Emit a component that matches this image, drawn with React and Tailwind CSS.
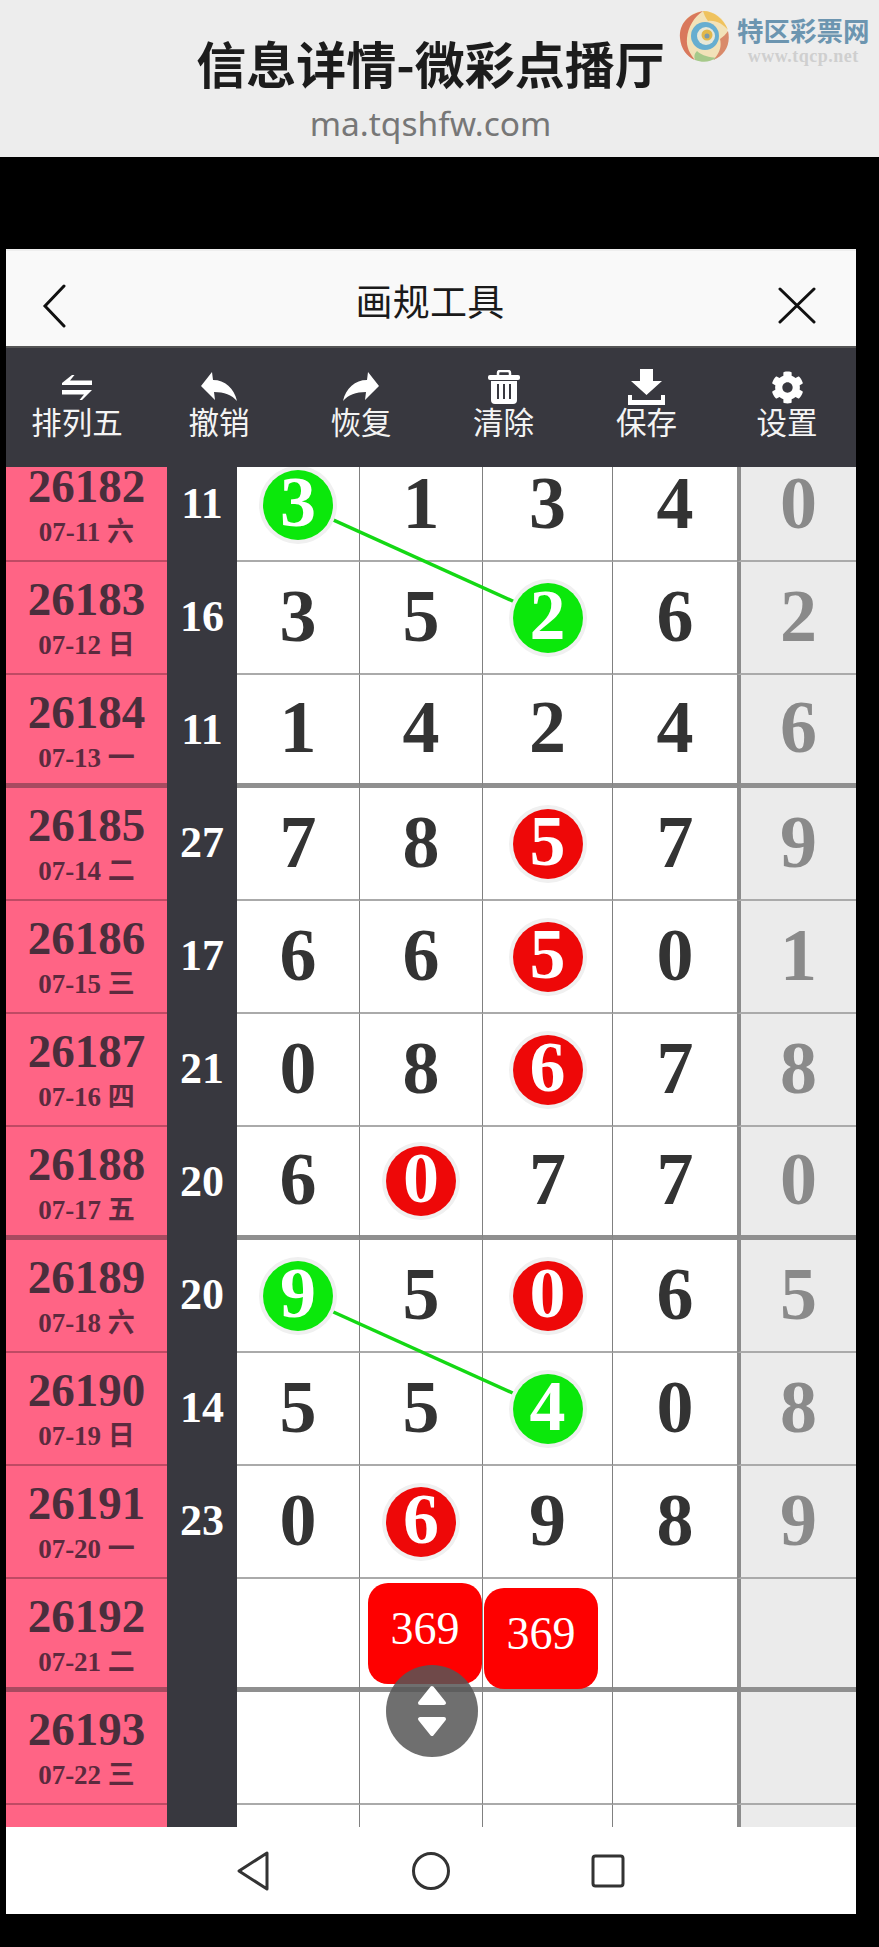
import React from "react";
import { FaCog } from "react-icons/fa";

const rows = [
  { id: "26182", date: "07-11 六", sum: "11", nums: ["3", "1", "3", "4", "0"], hit: { 0: "green" } },
  { id: "26183", date: "07-12 日", sum: "16", nums: ["3", "5", "2", "6", "2"], hit: { 2: "green" } },
  { id: "26184", date: "07-13 一", sum: "11", nums: ["1", "4", "2", "4", "6"], thick: true },
  { id: "26185", date: "07-14 二", sum: "27", nums: ["7", "8", "5", "7", "9"], hit: { 2: "red" } },
  { id: "26186", date: "07-15 三", sum: "17", nums: ["6", "6", "5", "0", "1"], hit: { 2: "red" } },
  { id: "26187", date: "07-16 四", sum: "21", nums: ["0", "8", "6", "7", "8"], hit: { 2: "red" } },
  { id: "26188", date: "07-17 五", sum: "20", nums: ["6", "0", "7", "7", "0"], hit: { 1: "red" }, thick: true },
  { id: "26189", date: "07-18 六", sum: "20", nums: ["9", "5", "0", "6", "5"], hit: { 0: "green", 2: "red" } },
  { id: "26190", date: "07-19 日", sum: "14", nums: ["5", "5", "4", "0", "8"], hit: { 2: "green" } },
  { id: "26191", date: "07-20 一", sum: "23", nums: ["0", "6", "9", "8", "9"], hit: { 1: "red" } },
  { id: "26192", date: "07-21 二", sum: "", nums: ["", "", "", "", ""], thick: true },
  { id: "26193", date: "07-22 三", sum: "", nums: ["", "", "", "", ""] },
  { id: "26194", date: "07-23 四", sum: "", nums: ["", "", "", "", ""] },
];

const tools = [
  { label: "排列五", icon: <SwapIcon /> },
  { label: "撤销", icon: <UndoIcon /> },
  { label: "恢复", icon: <UndoIcon flip /> },
  { label: "清除", icon: <TrashIcon /> },
  { label: "保存", icon: <SaveIcon /> },
  { label: "设置", icon: <FaCog className="w-[33px] h-[33px] text-white" /> },
];

function SwapIcon() {
  return (
    <svg width="30" height="25" viewBox="0 0 30 25" fill="#fff">
      <path d="M0 8 10 0h2.5L8 5.5h22V10H0z" />
      <path d="M0 15h30L20 25h-2.5l4.5-5.5H0z" />
    </svg>
  );
}

function UndoIcon({ flip }) {
  return (
    <svg width="36" height="30" viewBox="0 0 36 30" fill="#fff" className={flip ? "-scale-x-100" : ""}>
      <path d="M0 14 11 0l1 8c12 0 21 8 24 21-5-6-13-9-23-9l1 8z" />
    </svg>
  );
}

function TrashIcon() {
  return (
    <svg width="32" height="34" viewBox="0 0 32 34">
      <path d="M10 5V3q0-2 2-2h8q2 0 2 2v2" fill="none" stroke="#fff" strokeWidth="2.5" />
      <rect x="0" y="5" width="32" height="5" rx="2" fill="#fff" />
      <path d="M3 11h26v19q0 4-4 4H7q-4 0-4-4z" fill="#fff" />
      <path d="M10 14v15M16 14v15M22 14v15" stroke="#38383f" strokeWidth="2" />
    </svg>
  );
}

function SaveIcon() {
  return (
    <svg width="37" height="36" viewBox="0 0 37 36" fill="#fff">
      <path d="M12 0h13v12h9L18.5 26 3 12h9z" />
      <path d="M0 26h4v5h29v-5h4v10H0z" />
    </svg>
  );
}

function Ball({ color, children }) {
  return (
    <div
      className={`relative z-10 flex items-center justify-center mt-[4px] w-[70px] h-[70px] pb-[6px] box-border rounded-full text-white text-[72px] leading-none shadow-[0_0_0_4px_#f0f0f0] ${
        color === "green" ? "bg-[#0be80b]" : "bg-[#ee0808]"
      }`}
    >
      {children}
    </div>
  );
}

function Row({ row }) {
  const line = row.thick ? "border-b-[5px] border-b-[#8f8f8f]" : "border-b-2 border-b-[#aaa]";
  const pinkLine = row.thick ? "border-b-[5px] border-b-[#a84a60]" : "border-b-2 border-b-[#bf4a64]";
  return (
    <div className="grid grid-cols-[161px_70px_123px_123px_130px_124px_119px] h-[113px] font-['Liberation_Serif','Noto_Sans_CJK_SC',serif] font-bold">
      <div className={`box-border flex flex-col items-center pt-[14px] bg-[#ff6485] text-[#4a2e3c] ${pinkLine}`}>
        <div className="text-[47px] leading-[47px]">{row.id}</div>
        <div className="mt-[7px] text-[27px] leading-[30px] text-[#5c2a3e]">{row.date}</div>
      </div>
      <div className="flex items-center justify-center pb-[4px] bg-[#38383f] text-white text-[44px] leading-none">{row.sum}</div>
      {row.nums.map((num, i) => (
        <div
          key={i}
          className={`box-border flex items-center justify-center pb-[4px] text-[74px] leading-none ${line} ${
            i === 4 ? "bg-[#ebebeb] text-[#8a8a8a] border-l-4 border-l-[#8c8c8c]" : "bg-white text-[#333]"
          } ${i < 3 ? "border-r border-r-[#808080]" : ""}`}
        >
          {row.hit && row.hit[i] ? <Ball color={row.hit[i]}>{num}</Ball> : num}
        </div>
      ))}
    </div>
  );
}

function Logo() {
  return (
    <div className="absolute left-[678px] top-[9px] flex gap-[7px]">
      <svg width="52" height="54" viewBox="0 0 52 54" fill="none" className="blur-[0.5px]">
        <ellipse cx="26" cy="27" rx="24" ry="25" fill="#f2e2b8" />
        <path d="M25 2C10 5 1 15 2 29c1 11 7 19 15 22-5-6-9-13-8-22C10 18 16 8 25 2z" fill="#d9785c" />
        <path d="M25 2c11 0 21 8 25 19-5-6-12-10-20-9-3-4-4-7-5-10z" fill="#efc25e" />
        <path d="M50 22c3 13-3 25-15 29 6-6 9-13 7-21 3-2 6-5 8-8z" fill="#d98a6a" />
        <path d="M17 51c8 3 15 2 21-2-6-1-14-2-19-7-3 3-3 6-2 9z" fill="#a6c98a" />
        <circle cx="27" cy="27" r="14" fill="#67aed0" />
        <circle cx="28" cy="27" r="9" fill="#e8e8d8" />
        <circle cx="29" cy="26" r="5.5" fill="#e3b84a" />
        <circle cx="29" cy="27" r="2.5" fill="#7d9aa8" />
      </svg>
      <div className="flex flex-col items-center pt-[6px]">
        <div className="text-[26.5px] leading-[30px] font-bold text-[#6c95b0] font-['Noto_Sans_CJK_SC',sans-serif]">特区彩票网</div>
        <div className="mt-[2px] text-[18px] leading-[18px] font-bold tracking-[0.5px] text-[#cfcfcf] font-['Liberation_Serif',serif]">www.tqcp.net</div>
      </div>
    </div>
  );
}

export default function App() {
  return (
    <div className="w-[879px] h-[1947px] bg-black overflow-hidden font-['Noto_Sans_CJK_SC',sans-serif]">
      <header className="relative h-[157px] bg-[#ededed] flex flex-col items-center pr-[18px] box-border">
        <h1 className="mt-[30px] text-[50px] leading-[64px] font-bold text-[#1c1c1c]">信息详情-微彩点播厅</h1>
        <div className="mt-[7px] text-[33.5px] leading-[44px] text-[#777] font-['Noto_Sans',sans-serif]">ma.tqshfw.com</div>
        <Logo />
      </header>

      <div className="ml-[6px] mt-[92px] w-[850px]">
        <div className="grid grid-cols-[1fr_auto_1fr] items-center h-[97px] pl-[36px] pr-[38px] bg-[#f9f9f9] border-t-2 border-t-[#eee] box-border">
          <svg width="24" height="44" viewBox="0 0 24 44" fill="none" stroke="#111" strokeWidth="3" strokeLinecap="round" className="mt-[14px]">
            <path d="M22 2 3 22l19 20" />
          </svg>
          <div className="text-[37px] leading-[50px] text-[#1a1a1a] tracking-[0.3px] mt-[2px]">画规工具</div>
          <svg width="38" height="37" viewBox="0 0 38 37" fill="none" stroke="#111" strokeWidth="3" strokeLinecap="round" className="justify-self-end mr-[2px] mt-[14px]">
            <path d="M2 2l34 33M36 2 2 35" />
          </svg>
        </div>

        <div className="grid grid-cols-[142px_142px_142px_143px_143px_138px] h-[121px] bg-[#38383f] pt-[21px] box-border border-t-2 border-t-[#555]">
          {tools.map((tool) => (
            <div key={tool.label} className="flex flex-col items-center">
              <div className="flex items-center justify-center h-[36px]">{tool.icon}</div>
              <div className="-mt-[2px] text-[30.5px] leading-[36px] text-[#f4f4f4]">{tool.label}</div>
            </div>
          ))}
        </div>

        <div className="relative h-[1360px] overflow-hidden">
          <div className="-mt-[18px]">
            {rows.map((row) => (
              <Row key={row.id} row={row} />
            ))}
          </div>
          <svg width="850" height="1360" className="absolute left-0 top-0 z-[5]" fill="none" stroke="#14d814" strokeWidth="3.5">
            <path d="M292 37 542 150" />
            <path d="M292 829 542 942" />
          </svg>
          <div className="absolute left-[362px] top-[1116px] z-10 flex items-center justify-center w-[114px] h-[101px] pb-[10px] box-border rounded-[20px] bg-[#fe0000] text-white text-[46px] font-['Liberation_Serif',serif]">
            369
          </div>
          <div className="absolute left-[478px] top-[1121px] z-10 flex items-center justify-center w-[114px] h-[101px] pb-[10px] box-border rounded-[20px] bg-[#fe0000] text-white text-[46px] font-['Liberation_Serif',serif]">
            369
          </div>
          <div className="absolute left-[380px] top-[1198px] z-20 w-[92px] h-[92px] rounded-full bg-[#565656]/85 flex items-center justify-center">
            <svg width="30" height="52" viewBox="0 0 30 52" fill="#fff" stroke="#fff" strokeWidth="4" strokeLinejoin="round">
              <path d="M15 3 27 18H3z" />
              <path d="M3 34h24L15 49z" />
            </svg>
          </div>
        </div>

        <div className="flex items-center justify-center gap-[139px] h-[87px] bg-white">
          <svg width="36" height="40" viewBox="0 0 36 40" fill="none" stroke="#333" strokeWidth="3" strokeLinejoin="round">
            <path d="M31 2v36L3 20z" />
          </svg>
          <svg width="40" height="40" viewBox="0 0 40 40" fill="none" stroke="#333" strokeWidth="3">
            <circle cx="20" cy="20" r="17.5" />
          </svg>
          <svg width="36" height="36" viewBox="0 0 36 36" fill="none" stroke="#333" strokeWidth="3" strokeLinejoin="round">
            <rect x="3" y="3" width="30" height="30" rx="2.5" />
          </svg>
        </div>
      </div>
    </div>
  );
}
